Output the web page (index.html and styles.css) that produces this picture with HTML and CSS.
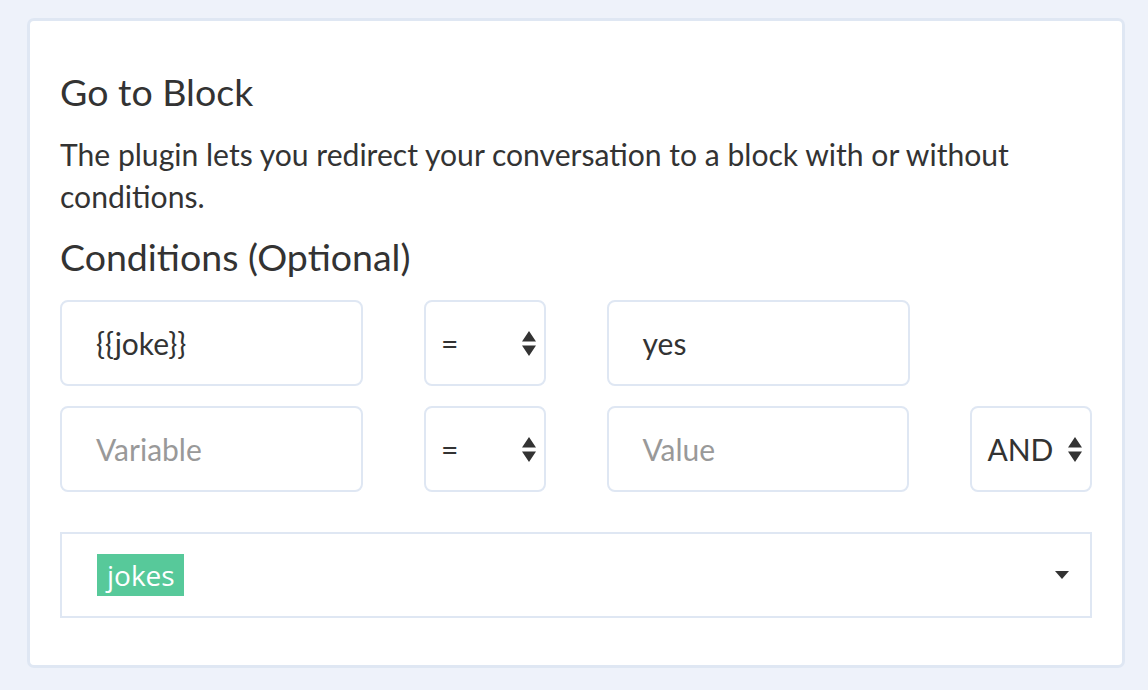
FILE: index.html
```html
<!DOCTYPE html>
<html>
<head>
<meta charset="utf-8">
<link rel="stylesheet" href="styles.css">
</head>
<body>
<div class="card">
  <h1 class="title">Go to Block</h1>
  <p class="desc">The plugin lets you redirect your conversation to a block with or without conditions.</p>
  <h2 class="subtitle">Conditions (Optional)</h2>
  <div class="rows">
    <div class="row">
      <div class="field text">{{joke}}</div>
      <div class="field select"><span>=</span>
        <svg class="updown" width="14" height="25" viewBox="0 0 14 25"><path d="M7 0 L14 10.5 L0 10.5 Z M0 14.5 L14 14.5 L7 25 Z" fill="#333"/></svg>
      </div>
      <div class="field text">yes</div>
      <div class="spacer"></div>
    </div>
    <div class="row">
      <div class="field text placeholder">Variable</div>
      <div class="field select"><span>=</span>
        <svg class="updown" width="14" height="25" viewBox="0 0 14 25"><path d="M7 0 L14 10.5 L0 10.5 Z M0 14.5 L14 14.5 L7 25 Z" fill="#333"/></svg>
      </div>
      <div class="field text placeholder">Value</div>
      <div class="field select and"><span>AND</span>
        <svg class="updown" width="14" height="25" viewBox="0 0 14 25"><path d="M7 0 L14 10.5 L0 10.5 Z M0 14.5 L14 14.5 L7 25 Z" fill="#333"/></svg>
      </div>
    </div>
  </div>
  <div class="block-select">
    <span class="tag">jokes</span>
    <svg class="caret" width="14" height="8" viewBox="0 0 14 8"><path d="M0 0 L14 0 L7 8 Z" fill="#333"/></svg>
  </div>
</div>
</body>
</html>
```
FILE: styles.css
```css
html, body {
  margin: 0;
  padding: 0;
  background: #eef2fa;
}
body {
  padding: 18px 23px 0 27px;
  font-family: Lato, "Open Sans", sans-serif;
  color: #333;
}
.card {
  box-sizing: border-box;
  width: 1098px;
  height: 650px;
  background: #fff;
  border: 3px solid #dfe7f3;
  border-radius: 7px;
  padding: 48px 30px 0 30px;
}
.title {
  margin: 0;
  font-size: 37.5px;
  font-weight: 400;
  line-height: 45px;
}
.desc {
  margin: 19px 0 0 0;
  font-size: 30.1px;
  line-height: 42px;
}
.subtitle {
  margin: 17px 0 0 0;
  font-size: 37.5px;
  font-weight: 400;
  line-height: 45px;
}
.rows {
  margin-top: 21px;
  display: flex;
  flex-direction: column;
  gap: 20px;
}
.row {
  display: flex;
  gap: 61px;
}
.field {
  box-sizing: border-box;
  height: 86px;
  border: 2px solid #dfe7f3;
  border-radius: 8px;
  display: flex;
  align-items: center;
  font-size: 30px;
}
.text {
  width: 304px;
  padding-left: 34px;
}
.placeholder {
  color: #999;
}
.select {
  width: 122px;
  padding: 0 8px 0 15px;
  justify-content: space-between;
}
.spacer {
  width: 122px;
}
.updown {
  display: block;
}
.block-select {
  box-sizing: border-box;
  margin-top: 40px;
  height: 86px;
  border: 2px solid #dfe7f3;
  display: flex;
  align-items: center;
  justify-content: space-between;
  padding: 0 21px 0 35px;
}
.tag {
  display: inline-block;
  background: #57c99a;
  color: #fff;
  height: 42px;
  line-height: 42px;
  padding: 0 9px 0 10px;
  font-family: "Open Sans", sans-serif;
  font-size: 28px;
}
.caret {
  display: block;
}
```
